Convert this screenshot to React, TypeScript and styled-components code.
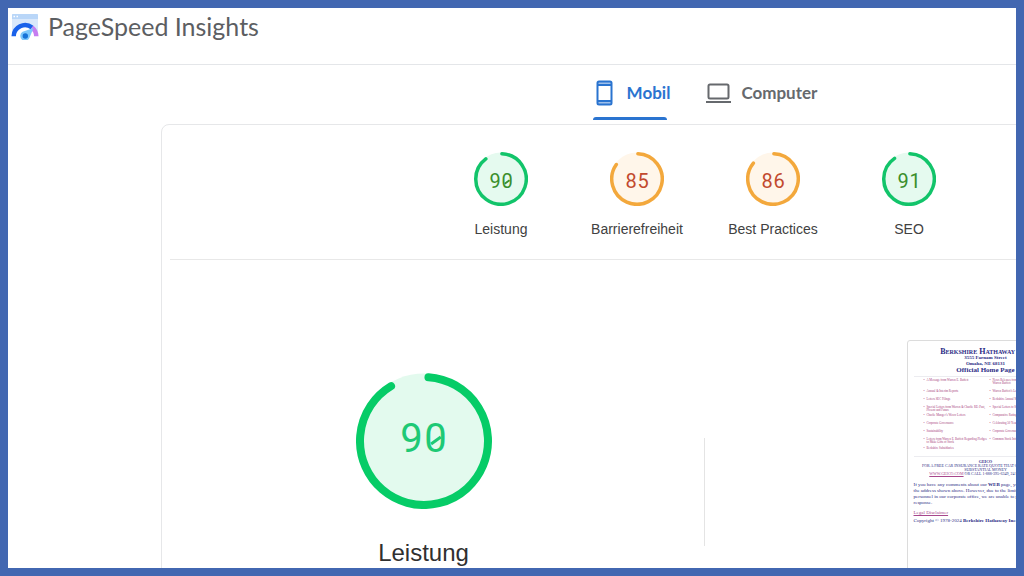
import React from 'react';
import styled, { createGlobalStyle } from 'styled-components';

const Global = createGlobalStyle`
  * { box-sizing: border-box; }
  body { margin: 0; background: #4267b1; }
`;

const sans = '"Liberation Sans", Arial, sans-serif';
const product = 'Lato, "Open Sans", sans-serif';

const Frame = styled.div`
  height: 100vh;
  border: 8px solid #4267b1;
  background: #fff;
  color: #3c4043;
  font-family: ${sans};
  overflow: hidden;
`;

const Header = styled.header`
  display: flex;
  align-items: flex-start;
  gap: 9px;
  height: 57px;
  padding: 4px 3px;
  border-bottom: 1px solid #e4e6e9;
`;

const Title = styled.h1`
  margin: 0;
  font: 400 25px/28px ${product};
  color: #5c5e62;
  white-space: nowrap;
`;

const Main = styled.main`
  width: max-content;
  padding-left: 153px;
`;

const Tabs = styled.nav`
  display: flex;
  justify-content: center;
  gap: 36px;
  height: 59px;
  padding-left: 2px;
`;

const Tab = styled.button<{ $active?: boolean }>`
  position: relative;
  display: flex;
  align-items: center;
  gap: 10px;
  height: 55px;
  padding: 0;
  border: 0;
  background: none;
  font: 700 17px/24px ${product};
  color: ${p => (p.$active ? '#2a74d0' : '#66696d')};

  &::after {
    content: "";
    display: ${p => (p.$active ? 'block' : 'none')};
    position: absolute;
    left: 0;
    right: 3px;
    bottom: 0;
    height: 3px;
    border-radius: 3px 3px 0 0;
    background: #2a74d0;
  }
`;

const Panel = styled.section`
  width: 1086px;
  padding: 0 8px;
  border: 1px solid #e6e7e9;
  border-radius: 8px;
`;

const Scores = styled.div`
  display: grid;
  grid-template-columns: repeat(4, 136px);
  justify-content: center;
  height: 135px;
  padding: 27px 0 0 2px;
  border-bottom: 1px solid #e8e8e8;
`;

const Score = styled.a`
  display: flex;
  flex-direction: column;
  align-items: center;
  gap: 13px;
  color: #414141;
  text-decoration: none;
  font-size: 14px;
  line-height: 20px;
`;

const Dial = styled.div<{ $size: number }>`
  display: grid;
  place-items: center;
  width: ${p => p.$size}px;
  height: ${p => p.$size}px;
  > * { grid-area: 1 / 1; }
`;

const Value = styled.span<{ $large?: boolean; $color: string }>`
  display: flex;
  padding: ${p => (p.$large ? '0 0 4px' : '4px 0 0')};
  font: 400 ${p => (p.$large ? 40 : 20)}px/1 Roboto, sans-serif;
  color: ${p => p.$color};
`;

const Digit = styled.span<{ $slashed: boolean }>`
  position: relative;
  width: 0.6em;
  text-align: center;

  &::after {
    content: "";
    display: ${p => (p.$slashed ? 'block' : 'none')};
    position: absolute;
    top: 50%;
    left: 25%;
    width: 50%;
    height: 0.08em;
    background: currentColor;
    transform: rotate(-36deg);
  }
`;

const Details = styled.div`
  display: grid;
  grid-template-columns: 1fr 54px 1fr;
  height: 400px;
`;

const Performance = styled.div`
  display: flex;
  flex-direction: column;
  align-items: center;
  gap: 28px;
  padding-top: 113px;
`;

const Caption = styled.h2`
  margin: 0;
  font-weight: 400;
  font-size: 24px;
  line-height: 32px;
  color: #303030;
`;

const Rule = styled.div`
  justify-self: center;
  width: 1px;
  height: 108px;
  margin-top: 178px;
  background: #e4e4e4;
`;

const Preview = styled.article`
  justify-self: center;
  width: 156px;
  height: 300px;
  margin-top: 80px;
  padding: 7px 4px 7px 6px;
  border: 1px solid #dcdcdc;
  border-radius: 3px;
  font-family: "Liberation Serif", serif;
  color: #2b2b85;
`;

const Masthead = styled.div`
  padding-bottom: 2px;
  border-bottom: 1px solid #ececf0;
  text-align: center;
  font-weight: 700;
  font-size: 5px;
  line-height: 6px;
`;

const Company = styled.div`
  font-size: 8px;
  line-height: 7px;
  font-variant: small-caps;
  white-space: nowrap;
`;

const Official = styled.div`
  font-size: 7px;
  line-height: 7px;
`;

const Links = styled.div`
  display: grid;
  grid-template-columns: 66px 68px;
  justify-content: end;
  height: 80px;
  border-bottom: 1px solid #ececf0;
`;

const LinkList = styled.ul`
  display: grid;
  grid-template-rows: 11px repeat(6, 8px) 9px 6px;
  margin: 0;
  padding: 2px 0 0;
  list-style: none;
  font-size: 3px;
  line-height: 3px;
  color: #a8407c;
`;

const LinkItem = styled.li`
  display: flex;
  gap: 2px;
  padding-right: 2px;

  &::before { content: "•"; }
`;

const SmallLink = styled.a`
  color: #a8478c;
`;

const Offer = styled.p`
  margin: 0;
  padding-top: 3px;
  text-align: center;
  font-size: 4px;
  line-height: 4px;
`;

const Note = styled.p<{ $gap: number }>`
  margin: ${p => p.$gap}px 0 0;
  font-size: 5px;
  line-height: 6px;
`;

const tones = {
  good: { ring: '#12c46a', fill: '#e5faef', text: '#3b8f2c' },
  fair: { ring: '#f3a83c', fill: '#fff6ea', text: '#c24a2e' },
};

function Ring({ size, stroke, start, end, ring, fill }: {
  size: number; stroke: number; start: number; end: number; ring: string; fill: string;
}) {
  const c = size / 2;
  const r = c - stroke / 2;
  const at = (deg: number) => {
    const a = (deg * Math.PI) / 180;
    return `${c + r * Math.sin(a)} ${c - r * Math.cos(a)}`;
  };
  return (
    <svg width={size} height={size} aria-hidden="true">
      <circle cx={c} cy={c} r={c - 0.5} fill={fill} />
      <path d={`M${at(start)}A${r} ${r} 0 1 1 ${at(end)}`} fill="none" stroke={ring} strokeWidth={stroke} strokeLinecap="round" />
    </svg>
  );
}

function ScoreValue({ value, large, color }: { value: number; large?: boolean; color: string }) {
  return (
    <Value $large={large} $color={color}>
      {String(value).split('').map((d, i) => <Digit key={i} $slashed={d === '0'}>{d}</Digit>)}
    </Value>
  );
}

const scores: { label: string; value: number; end: number; tone: 'good' | 'fair' }[] = [
  { label: 'Leistung', value: 90, end: 323, tone: 'good' },
  { label: 'Barrierefreiheit', value: 85, end: 305, tone: 'fair' },
  { label: 'Best Practices', value: 86, end: 309, tone: 'fair' },
  { label: 'SEO', value: 91, end: 325, tone: 'good' },
];

const leftLinks = ['A Message from Warren E. Buffett', 'Annual & Interim Reports', 'Letters SEC Filings', 'Special Letters from Warren & Charlie RE: Past, Present and Future', 'Charlie Munger’s Wesco Letters', 'Corporate Governance', 'Sustainability', 'Letters from Warren E. Buffett Regarding Pledges to Make Gifts of Stock', 'Berkshire Subsidiaries'];
const rightLinks = ['News Releases from Berkshire Hathaway and Warren Buffett', 'Warren Buffett’s Letters to Berkshire Shareholders', 'Berkshire Annual Meeting', 'Special Letters to Shareholders', 'Comparative Ratings', 'Celebrating 50 Years of Partnership', 'Corporate Governance', 'Common Stock Information'];

function Logo() {
  return (
    <svg width="28" height="28" viewBox="0 0 28 28" aria-hidden="true">
      <path d="M1 3a1 1 0 0 1 1-1h24a1 1 0 0 1 1 1v17H1z" fill="#d9e8fb" />
      <path d="M1 3a1 1 0 0 1 1-1h24a1 1 0 0 1 1 1v4H1z" fill="#b9d6f8" />
      <path d="M2.500 4.500h1.500M5.500 4.500h1.500" stroke="#fff" strokeWidth="1.500" />
      <path d="M5 24.300a9 9 0 0 1 18 0z" fill="#fff" />
      <path d="M2.700 24.300A11.300 11.300 0 0 1 21 15.500" fill="none" stroke="#1a62ea" strokeWidth="4.500" />
      <path d="M21 15.500A11.300 11.300 0 0 1 25.300 24.300" fill="none" stroke="#c67df0" strokeWidth="4.500" />
      <path d="M22.500 16L18.600 25.500a4.800 4.800 0 1 1-7-5.700z" fill="#7dc8fb" />
      <circle cx="14.300" cy="24" r="2.700" fill="#1673d8" />
    </svg>
  );
}

export default function App() {
  return (
    <>
      <Global />
      <Frame>
        <Header>
          <Logo />
          <Title>PageSpeed Insights</Title>
        </Header>
        <Main>
          <Tabs>
            <Tab $active>
              <svg width="24" height="28" viewBox="0 0 24 28" fill="none" stroke="currentColor" strokeWidth="2" aria-hidden="true">
                <rect x="4.500" y="2.500" width="14" height="23" rx="1.500" />
                <path d="M4.500 6h14M4.500 22h14" />
                <path d="M4.500 4h14M4.500 24h14" strokeOpacity=".45" />
              </svg>
              Mobil
            </Tab>
            <Tab>
              <svg width="25" height="20" viewBox="0 0 25 20" fill="none" stroke="currentColor" strokeWidth="2" aria-hidden="true">
                <rect x="2.500" y="1.500" width="20" height="14" rx="1.500" />
                <path d="M0 19h25" />
              </svg>
              Computer
            </Tab>
          </Tabs>
          <Panel>
            <Scores>
              {scores.map(s => (
                <Score key={s.label} href={`#${s.label}`}>
                  <Dial $size={54}>
                    <Ring size={54} stroke={3.5} start={2} end={s.end} ring={tones[s.tone].ring} fill={tones[s.tone].fill} />
                    <ScoreValue value={s.value} color={tones[s.tone].text} />
                  </Dial>
                  {s.label}
                </Score>
              ))}
            </Scores>
            <Details>
              <Performance>
                <Dial $size={136}>
                  <Ring size={136} stroke={8} start={4} end={329} ring="#06cc67" fill="#e3faee" />
                  <ScoreValue value={90} large color="#1ec975" />
                </Dial>
                <Caption>Leistung</Caption>
              </Performance>
              <Rule />
              <Preview>
                <Masthead>
                  <Company>Berkshire Hathaway Inc.</Company>
                  <div>3555 Farnam Street</div>
                  <div>Omaha, NE 68131</div>
                  <Official>Official Home Page</Official>
                </Masthead>
                <Links>
                  {[leftLinks, rightLinks].map((list, i) => (
                    <LinkList key={i}>{list.map(t => <LinkItem key={t}><span>{t}</span></LinkItem>)}</LinkList>
                  ))}
                </Links>
                <Offer>
                  <b>GEICO</b><br />
                  FOR A FREE CAR INSURANCE RATE QUOTE THAT COULD SAVE YOU SUBSTANTIAL MONEY<br />
                  <SmallLink href="#geico">WWW.GEICO.COM</SmallLink> OR CALL 1-888-395-6349, 24 HOURS A DAY
                </Offer>
                <Note $gap={6}>If you have any comments about our <b>WEB</b> page, you can write us at the address shown above. However, due to the limited number of personnel in our corporate office, we are unable to provide a direct response.</Note>
                <Note $gap={4}><SmallLink href="#legal">Legal Disclaimer</SmallLink></Note>
                <Note $gap={2}>Copyright © 1978-2024 <b>Berkshire Hathaway Inc.</b></Note>
              </Preview>
            </Details>
          </Panel>
        </Main>
      </Frame>
    </>
  );
}
